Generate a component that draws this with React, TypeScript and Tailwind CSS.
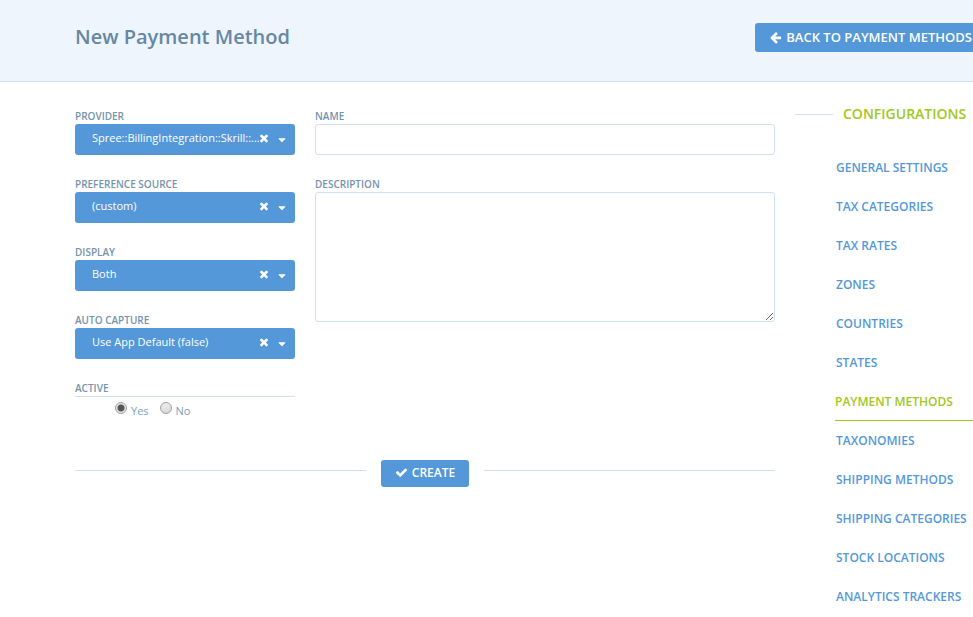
import { useState, type ReactNode } from "react";

const ICONS = {
  back: "M1536 896v128q0 53-32.5 90.5t-84.5 37.5h-704l293 294q38 36 38 90t-38 90l-75 76q-37 37-90 37-52 0-91-37l-651-652q-37-37-37-90 0-52 37-91l651-650q38-38 91-38 52 0 90 38l75 74q38 38 38 91t-38 91l-293 293h704q52 0 84.5 37.5t32.5 90.5z",
  check:
    "M1671 566q0 40-28 68l-724 724-136 136q-28 28-68 28t-68-28l-136-136-362-362q-28-28-28-68t28-68l136-136q28-28 68-28t68 28l294 295 656-657q28-28 68-28t68 28l136 136q28 28 28 68z",
  times:
    "M1490 1322q0 40-28 68l-136 136q-28 28-68 28t-68-28l-294-294-294 294q-28 28-68 28t-68-28l-136-136q-28-28-28-68t28-68l294-294-294-294q-28-28-28-68t28-68l136-136q28-28 68-28t68 28l294 294 294-294q28-28 68-28t68 28l136 136q28 28 28 68t-28 68l-294 294 294 294q28 28 28 68z",
  caret:
    "M1408 704q0 26-19 45l-448 448q-19 19-45 19t-45-19l-448-448q-19-19-19-45t19-45 45-19h896q26 0 45 19t19 45z",
};

function Icon({ name, className }: { name: keyof typeof ICONS; className: string }) {
  return (
    <svg viewBox="0 0 1792 1792" fill="currentColor" aria-hidden="true" className={className}>
      <path d={ICONS[name]} />
    </svg>
  );
}

const LABEL = "block text-[10px] leading-4 font-semibold uppercase text-[#7493ad]";
const FIELD = "block w-full rounded-[3px] border border-[#cee1f4] bg-white px-2 text-[12px] text-[#5b7c97] outline-none";

function Field({ id, label, children }: { id: string; label: string; children: ReactNode }) {
  return (
    <div>
      <label htmlFor={id} className={LABEL}>
        {label}
      </label>
      {children}
    </div>
  );
}

function SelectField({ id, label, value }: { id: string; label: string; value: string }) {
  const [selected, setSelected] = useState(value);
  return (
    <Field id={id} label={label}>
      <div className="relative">
        <select
          id={id}
          value={selected}
          onChange={(e) => setSelected(e.target.value)}
          className="block h-[31px] w-full appearance-none rounded-[3px] bg-[#5498da] pr-9 pb-[3px] pl-[17px] text-[11px] text-white outline-none"
        >
          <option value="" />
          <option value={value}>{value}</option>
        </select>
        <button
          type="button"
          aria-label={`Clear ${label}`}
          onClick={() => setSelected("")}
          className="absolute top-2 right-[25px] text-white"
        >
          <Icon name="times" className="size-3" />
        </button>
        <Icon name="caret" className="pointer-events-none absolute top-[10px] right-[7px] size-3 text-white" />
      </div>
    </Field>
  );
}

function Radio({ label, defaultChecked }: { label: string; defaultChecked?: boolean }) {
  return (
    <label className="flex gap-1 text-[11px] leading-4 text-[#7d9db8]">
      <input
        type="radio"
        name="active"
        defaultChecked={defaultChecked}
        className="size-3 appearance-none rounded-full border border-[#a0a0a0] bg-linear-to-b from-[#eeeeee] to-[#d8d8d8] checked:bg-[radial-gradient(circle,#555_0_3px,#e4e4e4_4px)]"
      />
      <span className="pt-px">{label}</span>
    </label>
  );
}

const LINKS = [
  "General Settings",
  "Tax Categories",
  "Tax Rates",
  "Zones",
  "Countries",
  "States",
  "Payment Methods",
  "Taxonomies",
  "Shipping Methods",
  "Shipping Categories",
  "Stock Locations",
  "Analytics Trackers",
];

export default function App() {
  return (
    <div className="overflow-x-hidden bg-white font-['Open_Sans',sans-serif]">
      <header className="flex h-[82px] items-start justify-between border-b border-[#cee1f4] bg-[#eef5fd] pl-[75px]">
        <h1 className="pt-[22px] text-[20px] leading-[30px] font-semibold text-[#6788a2]">New Payment Method</h1>
        <a
          href="#methods"
          className="mt-[23px] flex h-[29px] items-center gap-[3px] rounded-l-[3px] bg-[#5498da] pr-px pl-[15px] text-[13px] font-semibold whitespace-nowrap text-white uppercase"
        >
          <Icon name="back" className="size-[13px]" />
          Back to Payment Methods
        </a>
      </header>

      <div className="flex gap-5 pl-[75px]">
        <main className="min-w-0 flex-1 pt-[26px]">
          <form onSubmit={(e) => e.preventDefault()}>
            <div className="flex gap-5">
              <div className="flex w-[220px] shrink-0 flex-col gap-[21px]">
                <SelectField id="provider" label="Provider" value="Spree::BillingIntegration::Skrill::..." />
                <SelectField id="source" label="Preference Source" value="(custom)" />
                <SelectField id="display" label="Display" value="Both" />
                <SelectField id="capture" label="Auto Capture" value="Use App Default (false)" />
                <div role="radiogroup" aria-labelledby="active-label">
                  <div id="active-label" className={`${LABEL} box-content border-b border-[#cee1f4]`}>
                    Active
                  </div>
                  <div className="flex gap-[11px] pt-[5px] pl-10">
                    <Radio label="Yes" defaultChecked />
                    <Radio label="No" />
                  </div>
                </div>
              </div>
              <div className="flex min-w-0 flex-1 flex-col gap-[21px]">
                <Field id="name" label="Name">
                  <input id="name" type="text" className={`${FIELD} h-[31px]`} />
                </Field>
                <Field id="description" label="Description">
                  <textarea id="description" className={`${FIELD} h-[130px] resize py-1`} />
                </Field>
              </div>
            </div>
            <div className="mt-[41px] flex gap-[15px]">
              <span className="mt-[10px] h-px flex-1 bg-[#cee1f4]" />
              <button
                type="submit"
                className="flex h-[27px] items-center gap-1 rounded-[3px] bg-[#5498da] px-[14px] pb-[2px] text-[12px] font-semibold text-white uppercase"
              >
                <Icon name="check" className="size-[13px]" />
                Create
              </button>
              <span className="mt-[10px] h-px flex-1 bg-[#cee1f4]" />
            </div>
          </form>
        </main>

        <aside className="w-[178px] shrink-0 pt-[22px]">
          <div className="flex items-center gap-[10px]">
            <span className="h-px w-[38px] shrink-0 bg-[#cee1f4]" />
            <h2 className="text-[14px] leading-5 font-semibold text-[#9fc820] uppercase">Configurations</h2>
          </div>
          <nav aria-label="Configurations" className="pt-6 pl-10">
            <ul>
              {LINKS.map((link) => {
                const active = link === "Payment Methods";
                return (
                  <li key={link}>
                    <a
                      href="#configurations"
                      aria-current={active ? "page" : undefined}
                      className={`flex h-[39px] items-center border-b pt-[2px] text-[12px] font-semibold whitespace-nowrap uppercase ${
                        active ? "border-[#9fc820] text-[#9fc820]" : "border-transparent pl-px text-[#5498da]"
                      }`}
                    >
                      {link}
                    </a>
                  </li>
                );
              })}
            </ul>
          </nav>
        </aside>
      </div>
    </div>
  );
}
